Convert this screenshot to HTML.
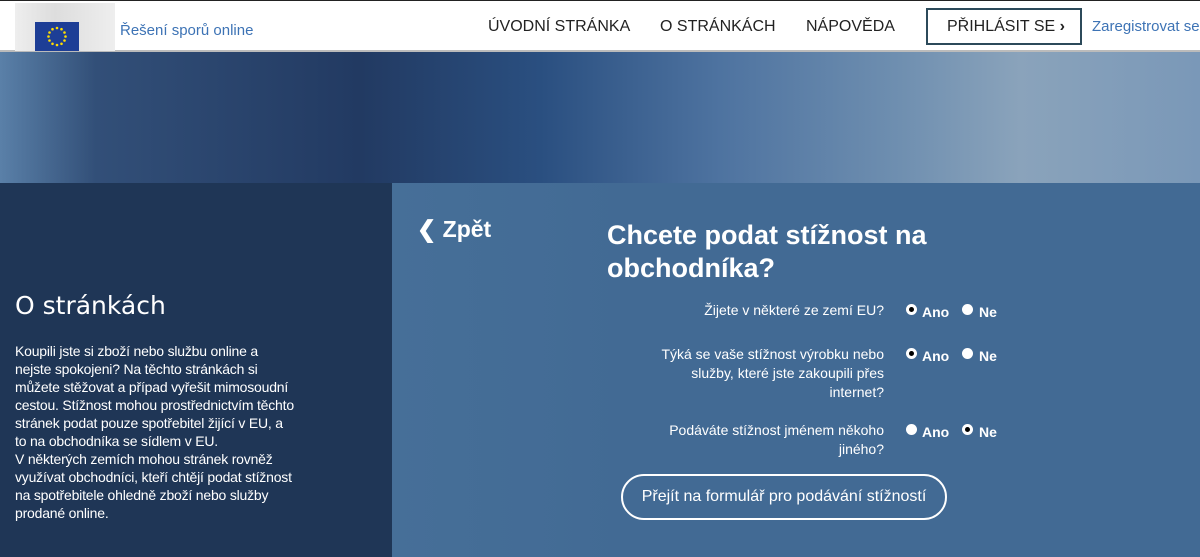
<!DOCTYPE html>
<html><head><meta charset="utf-8"><style>
*{margin:0;padding:0;box-sizing:border-box}
body{width:1200px;height:557px;overflow:hidden;font-family:"Liberation Sans",sans-serif;background:#436a94;position:relative}
.hdr{position:absolute;top:0;left:0;width:1200px;height:52px;background:#fff;border-top:1px solid #222;border-bottom:2px solid #bbb}
.logo{position:absolute;left:15px;top:2px;width:100px;height:48px;background:linear-gradient(90deg,#eee,#ddd 40%,#eee);}
.flag{position:absolute;left:35px;top:21px;width:44px;height:29px;background:#1d3e96}
.site{position:absolute;left:120px;top:21px;font-size:15px;color:#3d73b5}
.nav{position:absolute;top:17px;font-size:16px;color:#222}
.btn{position:absolute;left:926px;top:7px;width:156px;height:37px;border:2px solid #2c4a5a;font-size:16px;color:#222;padding:8px 0 0 19px}
.reg{position:absolute;left:1092px;top:17px;font-size:15px;color:#3d73b5;white-space:nowrap}
.ban{position:absolute;top:52px;left:0;width:1200px;height:131px;background:linear-gradient(90deg,#5a80a8 0%,#324f78 8%,#223a62 30%,#2a4f80 45%,#4e73a0 60%,#6f8fb0 75%,#8aa3bb 85%,#7a98b8 100%)}
.left{position:absolute;top:183px;left:0;width:392px;height:374px;background:#1f3656;color:#fff}
.left h2{position:absolute;left:15px;top:108px;font-size:25px;font-weight:normal;font-family:"DejaVu Sans",sans-serif}
.left p{position:absolute;left:15px;top:159px;width:282px;font-size:14px;line-height:18px;letter-spacing:-0.2px}
.right{position:absolute;top:183px;left:392px;width:808px;height:374px;background:linear-gradient(90deg,#466f98,#426a94 30%)}
.back{position:absolute;left:25px;top:33px;color:#fff;font-size:23px;font-weight:bold}
h1{position:absolute;left:215px;top:36px;color:#fff;font-size:27px;line-height:33px;font-weight:bold;width:360px}
.q{position:absolute;right:316px;text-align:right;color:#fff;font-size:14px;line-height:19px;width:240px}
.opt{position:absolute;color:#fff;font-weight:bold;font-size:14px}
.r{display:inline-block;width:11px;height:11px;border-radius:50%;background:#fff;vertical-align:-1px;position:absolute}
.r.on::after{content:"";position:absolute;left:3px;top:3px;width:5px;height:5px;border-radius:50%;background:#000}
.go{position:absolute;left:229px;top:291px;width:326px;height:46px;border:2px solid #fff;border-radius:23px;color:#fff;font-size:16px;text-align:center;line-height:42px}
</style></head><body>
<div class="hdr">
<div class="logo"></div><div class="flag"><svg width="44" height="29"><g fill="#fd0">
<circle cx="22" cy="6" r="1.3"/><circle cx="26.5" cy="7.2" r="1.3"/><circle cx="29.5" cy="10.5" r="1.3"/><circle cx="30.5" cy="14.5" r="1.3"/><circle cx="29.5" cy="18.5" r="1.3"/><circle cx="26.5" cy="21.8" r="1.3"/><circle cx="22" cy="23" r="1.3"/><circle cx="17.5" cy="21.8" r="1.3"/><circle cx="14.5" cy="18.5" r="1.3"/><circle cx="13.5" cy="14.5" r="1.3"/><circle cx="14.5" cy="10.5" r="1.3"/><circle cx="17.5" cy="7.2" r="1.3"/></g></svg></div>
<div class="site">Řešení sporů online</div>
<div class="nav" style="left:488px">ÚVODNÍ STRÁNKA</div>
<div class="nav" style="left:660px">O STRÁNKÁCH</div>
<div class="nav" style="left:806px">NÁPOVĚDA</div>
<div class="btn">PŘIHLÁSIT SE <b>›</b></div>
<div class="reg">Zaregistrovat se</div>
</div>
<div class="ban"></div>
<div class="left"><h2>O stránkách</h2><p>Koupili jste si zboží nebo službu online a nejste spokojeni? Na těchto stránkách si můžete stěžovat a případ vyřešit mimosoudní cestou. Stížnost mohou prostřednictvím těchto stránek podat pouze spotřebitel žijící v EU, a to na obchodníka se sídlem v EU.<br>V některých zemích mohou stránek rovněž využívat obchodníci, kteří chtějí podat stížnost na spotřebitele ohledně zboží nebo služby prodané online.</p></div>
<div class="right">
<div class="back">❮ Zpět</div>
<h1>Chcete podat stížnost na obchodníka?</h1>
<div class="q" style="top:118px">Žijete v některé ze zemí EU?</div>
<div class="q" style="top:162px">Týká se vaše stížnost výrobku nebo služby, které jste zakoupili přes internet?</div>
<div class="q" style="top:238px">Podáváte stížnost jménem někoho jiného?</div>
<span class="r on" style="left:514px;top:121px"></span><div class="opt" style="left:530px;top:121px">Ano</div>
<span class="r" style="left:570px;top:121px"></span><div class="opt" style="left:587px;top:121px">Ne</div>
<span class="r on" style="left:514px;top:165px"></span><div class="opt" style="left:530px;top:165px">Ano</div>
<span class="r" style="left:570px;top:165px"></span><div class="opt" style="left:587px;top:165px">Ne</div>
<span class="r" style="left:514px;top:241px"></span><div class="opt" style="left:530px;top:241px">Ano</div>
<span class="r on" style="left:570px;top:241px"></span><div class="opt" style="left:587px;top:241px">Ne</div>
<div class="go">Přejít na formulář pro podávání stížností</div>
</div>
</body></html>
